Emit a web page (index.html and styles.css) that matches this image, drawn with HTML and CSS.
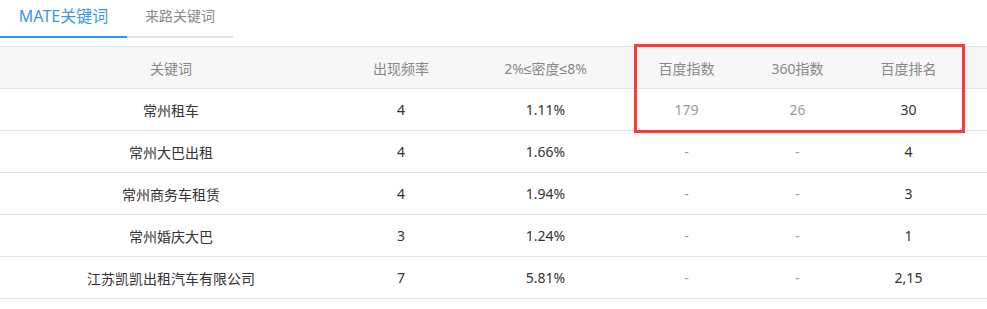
FILE: index.html
```html
<!DOCTYPE html>
<html lang="zh">
<head>
<meta charset="utf-8">
<title>关键词</title>
<link rel="stylesheet" href="styles.css">
</head>
<body>
<div class="page">
  <div class="tabs">
    <div class="tab tab-active">MATE关键词</div>
    <div class="tab tab-idle">来路关键词</div>
  </div>
  <div class="table-wrap">
    <table class="kw-table">
      <colgroup>
        <col class="c1"><col class="c2"><col class="c3"><col class="c4"><col class="c5"><col class="c6"><col class="c7">
      </colgroup>
      <thead>
        <tr><th>关键词</th><th>出现频率</th><th>2%<span class="sym">≤</span>密度<span class="sym">≤</span>8%</th><th>百度指数</th><th>360指数</th><th>百度排名</th><th></th></tr>
      </thead>
      <tbody>
        <tr><td>常州租车</td><td>4</td><td>1.11%</td><td class="muted">179</td><td class="muted">26</td><td>30</td><td></td></tr>
        <tr><td>常州大巴出租</td><td>4</td><td>1.66%</td><td class="muted">-</td><td class="muted">-</td><td>4</td><td></td></tr>
        <tr><td>常州商务车租赁</td><td>4</td><td>1.94%</td><td class="muted">-</td><td class="muted">-</td><td>3</td><td></td></tr>
        <tr><td>常州婚庆大巴</td><td>3</td><td>1.24%</td><td class="muted">-</td><td class="muted">-</td><td>1</td><td></td></tr>
        <tr><td>江苏凯凯出租汽车有限公司</td><td>7</td><td>5.81%</td><td class="muted">-</td><td class="muted">-</td><td>2,15</td><td></td></tr>
      </tbody>
    </table>
    <div class="highlight"></div>
  </div>
</div>
</body>
</html>
```

FILE: styles.css
```css
html, body {
  margin: 0;
  padding: 0;
  background: #ffffff;
}
body {
  font-family: "Noto Sans", "Noto Sans CJK SC", sans-serif;
  color: #333333;
}
.page {
  width: 987px;
}
.tabs {
  display: flex;
}
.tab {
  height: 36px;
  line-height: 32px;
  text-align: center;
  border-bottom: 2px solid #e2e2e2;
  box-sizing: content-box;
}
.tab-active {
  width: 127px;
  font-size: 16px;
  color: #3a98e6;
  border-bottom-color: #2d9ce8;
}
.tab-idle {
  width: 106px;
  font-size: 14px;
  color: #8a8a8a;
}
.table-wrap {
  position: relative;
  margin-top: 8px;
}
.kw-table {
  width: 987px;
  border-collapse: collapse;
  table-layout: fixed;
  border-top: 1px solid #e5e5e5;
  font-size: 14px;
}
.c1 { width: 342px; }
.c2 { width: 118px; }
.c3 { width: 171px; }
.c4 { width: 111px; }
.c5 { width: 111px; }
.c6 { width: 111px; }
.c7 { width: 23px; }
.kw-table th,
.kw-table td {
  height: 41px;
  padding: 0;
  text-align: center;
  vertical-align: middle;
  border-bottom: 1px solid #e5e5e5;
}
.kw-table th {
  font-weight: normal;
  color: #888888;
  background: #f7f7f7;
}
.kw-table .sym {
  font-family: "Liberation Sans", sans-serif;
}
.kw-table td {
  color: #333333;
}
.kw-table td.muted {
  color: #999999;
}
.highlight {
  position: absolute;
  left: 634px;
  top: -2px;
  width: 325px;
  height: 83px;
  border: 3px solid #fb3a3a;
}
```
